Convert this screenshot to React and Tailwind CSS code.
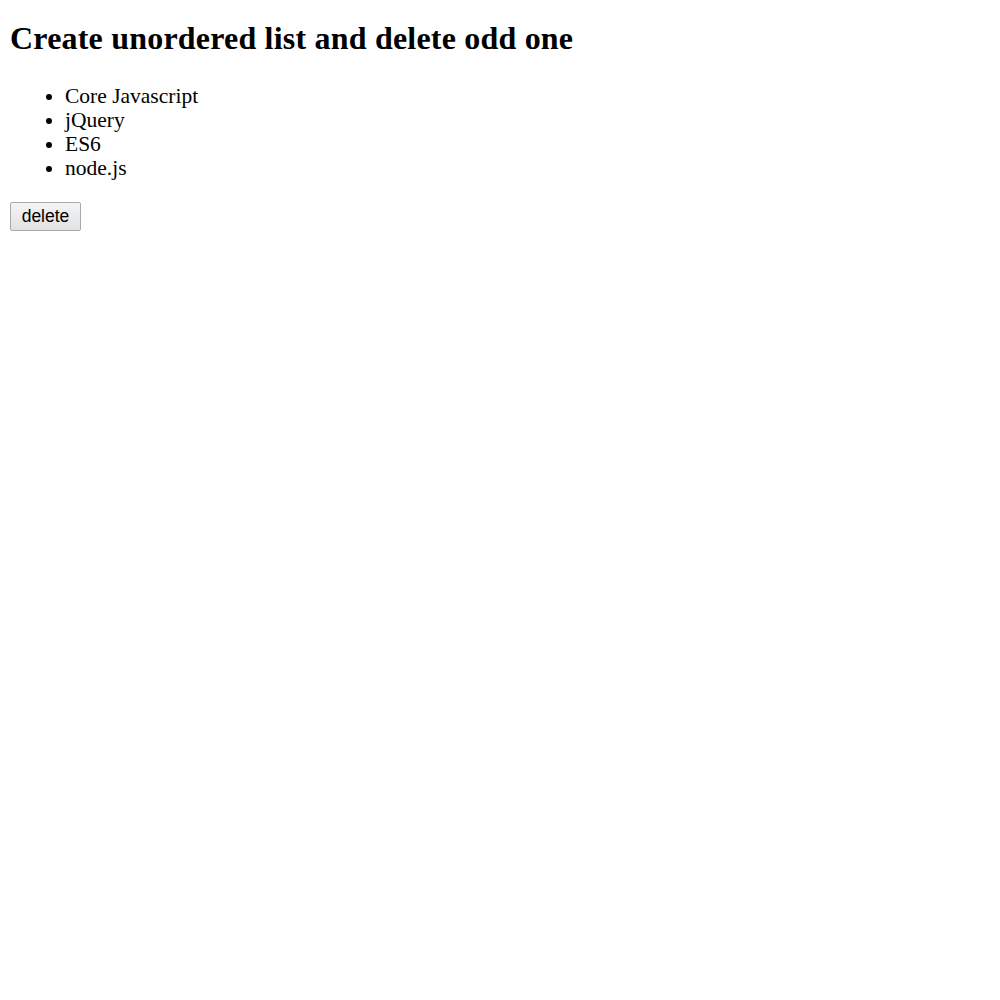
export default function App() {
  return (
    <div className="p-[10px] font-['Liberation_Serif',serif] text-black">
      <h2 className="mt-[10px] text-[32px] leading-[36px] font-bold tracking-[0.2px]">
        Create unordered list and delete odd one
      </h2>

      <ul className="mt-[28px] list-disc pl-[55px] text-[21.5px] leading-[24px]">
        <li>Core Javascript</li>
        <li>jQuery</li>
        <li>ES6</li>
        <li>node.js</li>
      </ul>

      <button className="mt-[22px] h-[29px] w-[71px] rounded-[2px] border border-[#a9a9a9] bg-gradient-to-b from-[#f4f4f4] to-[#e2e2e2] font-['Liberation_Sans',Arial,sans-serif] text-[17.5px] leading-none">
        delete
      </button>
    </div>
  );
}
